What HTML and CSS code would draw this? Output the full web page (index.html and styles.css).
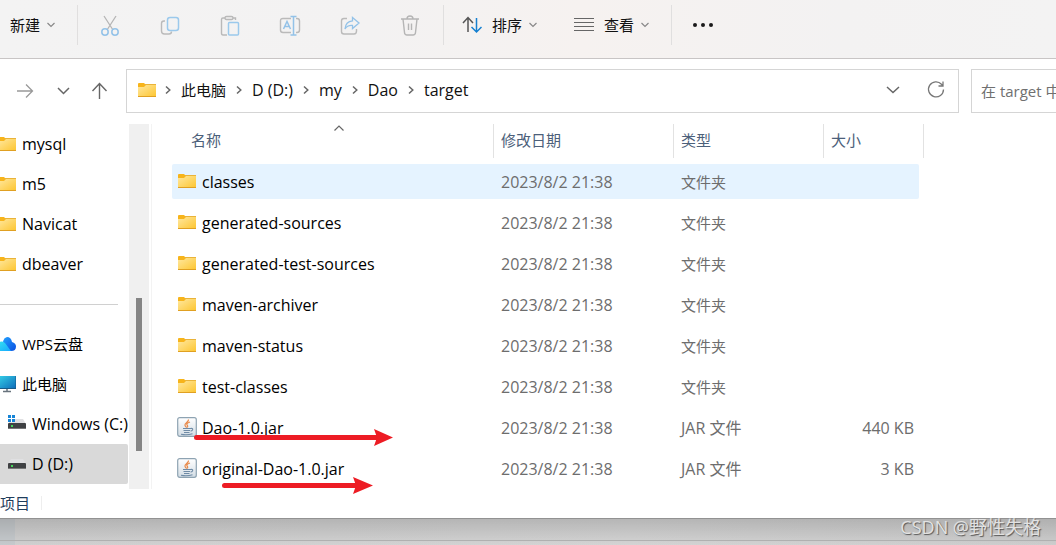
FILE: index.html
```html
<!DOCTYPE html>
<html lang="zh-CN">
<head>
<meta charset="utf-8">
<title>target</title>
<link rel="stylesheet" href="styles.css">
</head>
<body>
<svg class="defs" aria-hidden="true">
  <defs>
    <linearGradient id="gold" x1="0" y1="0" x2="1" y2="1"><stop offset="0" stop-color="#ffe8a0"/><stop offset="1" stop-color="#fdc52f"/></linearGradient>
    <linearGradient id="cloudA" x1="0" y1="0" x2="1" y2="1"><stop offset="0" stop-color="#22a0ff"/><stop offset="1" stop-color="#0a4fe0"/></linearGradient>
    <linearGradient id="cloudB" x1="0" y1="0" x2="1" y2="1"><stop offset="0" stop-color="#35e0f0"/><stop offset="1" stop-color="#16a8ff"/></linearGradient>
    <linearGradient id="screen" x1="0" y1="0" x2="1" y2="1"><stop offset="0" stop-color="#35d0e8"/><stop offset="1" stop-color="#0c69b8"/></linearGradient>
    <linearGradient id="paper" x1="0" y1="0" x2="0" y2="1"><stop offset="0" stop-color="#ffffff"/><stop offset="1" stop-color="#d3dde5"/></linearGradient>
    <symbol id="folder" viewBox="0 0 18 14">
      <path d="M0 1Q0 0 1 0H6L8 2H18V5H0Z" fill="#f7b41b"/>
      <path d="M0 4H6L8 2H18V14H0Z" fill="url(#gold)"/>
      <path d="M7 1.500H18" stroke="#e9b33a"/>
      <path d="M0 13.500H18" stroke="#e0a022"/>
    </symbol>
    <symbol id="down" viewBox="0 0 12 12"><path d="M2.500 4L6 7.500L9.500 4" fill="none" stroke="currentColor" stroke-width="1.200"/></symbol>
    <symbol id="right" viewBox="0 0 12 12"><path d="M4 2.500L7.800 6L4 9.500" fill="none" stroke="#666" stroke-width="1.500"/></symbol>
    <symbol id="drive" viewBox="0 0 18 18">
      <path d="M3 4H15L18 9H0Z" fill="#e0e0e2"/>
      <rect y="8" width="18" height="6" rx="1" fill="#3f4143"/><path d="M0 13.500H18" stroke="#777"/>
      <rect x="3" y="10" width="2" height="2" fill="#45d65a"/>
    </symbol>
    <symbol id="jar" viewBox="0 0 20 20">
      <rect x=".7" y=".7" width="18.600" height="18.600" rx="2" fill="url(#paper)" stroke="#8ea3b2" stroke-width="1.200"/>
      <path d="M11.500 2.500C12 5 7 6 8 8.500Q8.500 9.700 9.800 10.500M13 5C9.500 6 9.200 7.500 10.500 8.500Q11 9.500 10.300 10.500" fill="none" stroke="#e98a4a" stroke-width="1.200"/>
      <path d="M6 11.500H13.500M6.500 13.500H13M7 15.500H12.500M4 17.300Q10 18.500 15.500 16.800M13.500 11.500Q16.500 11 15.500 13Q15 14 13.500 14" fill="none" stroke="#6f8ba6" stroke-width="1.100"/>
    </symbol>
  </defs>
</svg>

<div class="toolbar">
  <button class="tool menu">新建<svg class="i12"><use href="#down"/></svg></button>
  <span class="sep"></span>
  <div class="icons">
    <button class="tool" aria-label="剪切"><svg class="i24" viewBox="0 0 24 24" fill="none"><path d="M6 3L15 17M18 3L9 17" stroke="#b5b5b5" stroke-width="1.300"/><circle cx="7" cy="19" r="3.200" stroke="#93c2e8" stroke-width="1.500"/><circle cx="17" cy="19" r="3.200" stroke="#93c2e8" stroke-width="1.500"/></svg></button>
    <button class="tool" aria-label="复制"><svg class="i24" viewBox="0 0 24 24" fill="none"><path d="M7 8H6Q3.500 8 3.500 10.500V18Q3.500 21 6.500 21H11Q13.500 21 13.500 18.500" stroke="#bababa" stroke-width="1.400"/><rect x="9.500" y="4.500" width="11" height="13" rx="2.500" stroke="#9bc9ec" stroke-width="1.500"/></svg></button>
    <button class="tool" aria-label="粘贴"><svg class="i24" viewBox="0 0 24 24" fill="none"><path d="M7 5H5Q3.500 5 3.500 6.500V20Q3.500 22 5 22H9M15 5H17.500V7" stroke="#b9b9b9" stroke-width="1.400"/><rect x="7" y="3.500" width="8" height="3" rx="1.500" stroke="#b9b9b9" stroke-width="1.400"/><rect x="10.500" y="9.500" width="10" height="12.500" rx="1" stroke="#9bc9ec" stroke-width="1.500"/></svg></button>
    <button class="tool" aria-label="重命名"><svg class="i24" viewBox="0 0 24 24" fill="none"><path d="M13 5.500H5Q2.500 5.500 2.500 8V17Q2.500 19.500 5 19.500H13M18 5.500H19Q21.500 5.500 21.500 8V17Q21.500 19.500 19 19.500H18" stroke="#bababa" stroke-width="1.400"/><path d="M5.500 16L9 8.500L12.500 16M6.500 13.500H11.500M15.500 4V22M12.500 3.500H18.500M12.500 22H18.500" stroke="#93c2e8" stroke-width="1.500"/></svg></button>
    <button class="tool" aria-label="共享"><svg class="i24" viewBox="0 0 24 24" fill="none"><path d="M9 5.500H6Q3.500 5.500 3.500 8V18.500Q3.500 21 6 21H16Q18.500 21 18.500 18V16" stroke="#bababa" stroke-width="1.400"/><path d="M14.500 4.500L21 10L14.500 15.500V12.500Q9.500 12 7 16Q7.500 8.500 14.500 7.800Z" stroke="#93c2e8" stroke-width="1.300"/></svg></button>
    <button class="tool" aria-label="删除"><svg class="i24" viewBox="0 0 24 24" fill="none" stroke="#b5b5b5" stroke-width="1.400"><path d="M3 6H21M5 6L6.500 19.500Q6.700 22 9 22H15Q17.300 22 17.500 19.500L19 6M9 6Q9 3 12 3T15 6M10.500 10.500V17M13.500 10.500V17"/></svg></button>
  </div>
  <span class="sep"></span>
  <button class="tool menu first"><svg class="i20" viewBox="0 0 20 20" fill="none" stroke-width="1.500"><path d="M6 17V3M1 8L6 2.500L11 8" stroke="#555"/><path d="M14.500 3V17M9.500 12L14.500 17L19.500 12" stroke="#1680d0"/></svg>排序<svg class="i12"><use href="#down"/></svg></button>
  <button class="tool menu second"><svg class="i20" viewBox="0 0 20 20"><path d="M0 3.500H20M0 7.500H20M0 11.500H20M0 15.500H20" stroke="#666" stroke-width="1.200"/></svg>查看<svg class="i12"><use href="#down"/></svg></button>
  <span class="sep"></span>
  <button class="tool more" aria-label="更多"><svg class="i24" viewBox="0 0 24 24" fill="#1a1a1a"><circle cx="4" cy="12" r="2"/><circle cx="12" cy="12" r="2"/><circle cx="20" cy="12" r="2"/></svg></button>
</div>

<div class="navbar">
  <div class="arrows">
    <button class="tool" aria-label="前进"><svg class="i20" viewBox="0 0 20 20" fill="none" stroke="#999" stroke-width="1.300"><path d="M2 10H17M11 3.500L17.500 10L11 16.500"/></svg></button>
    <button class="tool" aria-label="最近"><svg class="i20" viewBox="0 0 20 20" fill="none" stroke="#666" stroke-width="1.500"><path d="M6 7L11.500 12.500L17 7"/></svg></button>
    <button class="tool" aria-label="向上"><svg class="i20" viewBox="0 0 20 20" fill="none" stroke="#666" stroke-width="1.400"><path d="M10.500 18V3M3.500 10L10.500 2.500L17.500 10"/></svg></button>
  </div>
  <div class="address">
    <svg class="folder"><use href="#folder"/></svg>
    <nav class="crumbs" aria-label="路径">
      <svg class="i12"><use href="#right"/></svg><button class="tool cjk">此电脑</button>
      <svg class="i12"><use href="#right"/></svg><button class="tool">D (D:)</button>
      <svg class="i12"><use href="#right"/></svg><button class="tool">my</button>
      <svg class="i12"><use href="#right"/></svg><button class="tool">Dao</button>
      <svg class="i12"><use href="#right"/></svg><button class="tool">target</button>
    </nav>
    <button class="tool" aria-label="历史记录"><svg class="i20" viewBox="0 0 20 20" fill="none" stroke="#666" stroke-width="1.500"><path d="M4 7L10 12.500L16 7"/></svg></button>
    <button class="tool" aria-label="刷新"><svg class="i20" viewBox="0 0 20 20" fill="none" stroke="#777" stroke-width="1.300"><path d="M17.500 9.500A7.500 7.500 0 1 1 15.500 4.300L17 5.700M17 1.500V6H12.500"/></svg></button>
  </div>
  <input class="search" type="text" aria-label="搜索" placeholder="在 target 中搜索">
</div>

<div class="body">
  <nav class="side" aria-label="导航窗格">
    <button class="place"><svg class="folder"><use href="#folder"/></svg>mysql</button>
    <button class="place"><svg class="folder"><use href="#folder"/></svg>m5</button>
    <button class="place"><svg class="folder"><use href="#folder"/></svg>Navicat</button>
    <button class="place"><svg class="folder"><use href="#folder"/></svg>dbeaver</button>
    <hr>
    <button class="place cjk"><svg class="i18" viewBox="0 0 18 18"><path d="M6 15Q3 3 9 2Q13 2 14 7Q18 8 18 11.500Q18 16 13 16H6Z" fill="url(#cloudA)"/><path d="M0 15V8Q5 4 8.500 10L13 16H3Q1 16 0 15Z" fill="url(#cloudB)"/></svg>WPS云盘</button>
    <button class="place cjk"><svg class="i18" viewBox="0 0 18 18"><rect y="1" width="18" height="13" fill="url(#screen)"/><path d="M0 13.500H18M18 1V14" stroke="#175b88"/><path d="M9 14V16M5 16.500H13" stroke="#68737d" stroke-width="1.500"/></svg>此电脑</button>
    <button class="place sub"><svg class="i18" viewBox="0 0 18 18"><use href="#drive"/><path d="M0 0H7V7H0Z" fill="#fff"/><path d="M0 0H3V3H0ZM4 0H7V3H4ZM0 4H3V7H0ZM4 4H7V7H4Z" fill="#1684d6"/></svg>Windows (C:)</button>
    <button class="place sub on"><svg class="i18"><use href="#drive"/></svg>D (D:)</button>
  </nav>
  <div class="scroll"><span class="thumb"></span></div>
  <main class="files">
    <table>
      <colgroup><col class="c1"><col class="c2"><col class="c3"><col class="c4"><col class="c5"></colgroup>
      <thead><tr>
        <th class="name">名称<svg class="caret" viewBox="0 0 12 8"><path d="M1.500 6.500L6 2L10.500 6.500" fill="none" stroke="#666" stroke-width="1.200"/></svg></th>
        <th>修改日期</th><th>类型</th><th class="open">大小</th><th></th>
      </tr></thead>
      <tbody>
        <tr class="on"><td><span class="file"><svg class="folder"><use href="#folder"/></svg>classes</span></td><td>2023/8/2 21:38</td><td class="cjk">文件夹</td><td></td></tr>
        <tr><td><span class="file"><svg class="folder"><use href="#folder"/></svg>generated-sources</span></td><td>2023/8/2 21:38</td><td class="cjk">文件夹</td><td></td></tr>
        <tr><td><span class="file"><svg class="folder"><use href="#folder"/></svg>generated-test-sources</span></td><td>2023/8/2 21:38</td><td class="cjk">文件夹</td><td></td></tr>
        <tr><td><span class="file"><svg class="folder"><use href="#folder"/></svg>maven-archiver</span></td><td>2023/8/2 21:38</td><td class="cjk">文件夹</td><td></td></tr>
        <tr><td><span class="file"><svg class="folder"><use href="#folder"/></svg>maven-status</span></td><td>2023/8/2 21:38</td><td class="cjk">文件夹</td><td></td></tr>
        <tr><td><span class="file"><svg class="folder"><use href="#folder"/></svg>test-classes</span></td><td>2023/8/2 21:38</td><td class="cjk">文件夹</td><td></td></tr>
        <tr><td><span class="file"><svg class="i20"><use href="#jar"/></svg>Dao-1.0.jar</span><svg class="mark long" viewBox="0 0 200 18" fill="#ed1c24"><rect y="6" width="190" height="5" rx="2.500"/><path d="M180 0L199 8.500L180 17L183 8.500Z"/></svg></td><td>2023/8/2 21:38</td><td>JAR 文件</td><td>440 KB</td></tr>
        <tr><td><span class="file"><svg class="i20"><use href="#jar"/></svg>original-Dao-1.0.jar</span><svg class="mark short" viewBox="0 0 152 18" fill="#ed1c24"><rect y="6" width="142" height="5" rx="2.500"/><path d="M131 0L151 8.500L131 17L134 8.500Z"/></svg></td><td>2023/8/2 21:38</td><td>JAR 文件</td><td>3 KB</td></tr>
      </tbody>
    </table>
  </main>
</div>

<footer class="status"><span>项目</span></footer>
<div class="desk"><span class="credit">CSDN @野性失格</span></div>
</body>
</html>
```

FILE: styles.css
```css
* { box-sizing: border-box; }
body {
  margin: 0;
  min-height: 100vh;
  display: flex;
  flex-direction: column;
  overflow: hidden;
  background: #fff;
  color: #111;
  font: 16px/20px "Open Sans", "Noto Sans CJK SC", sans-serif;
}
button, input { font: inherit; color: inherit; }
svg { flex: none; display: block; }
.defs { position: absolute; width: 0; height: 0; }
.i12 { width: 12px; height: 12px; }
.i18 { width: 18px; height: 18px; }
.i20 { width: 20px; height: 20px; }
.i24 { width: 24px; height: 24px; }
.folder { width: 18px; height: 14px; }

.tool {
  display: flex;
  align-items: center;
  justify-content: center;
  padding: 0;
  border: 0;
  background: none;
  white-space: nowrap;
}

.toolbar {
  display: flex;
  align-items: center;
  height: 59px;
  padding: 0 0 8px 10px;
  background: linear-gradient(90deg, #f3f3f3, #f3f2f2 35%, #f6f2f0 55%, #f3f2f2 80%, #f3f3f3);
  border-bottom: 1px solid #c8c5c5;
}
.menu, .cjk, th, .status, .search { font-size: 15px; }
.menu { gap: 5px; }
.menu .i12 { color: #888; }
.menu .i20 { margin-right: 5px; }
.sep { width: 1px; height: 40px; background: #e0dfdf; }
.menu + .sep { margin-left: 20px; }
.icons { display: flex; gap: 20px; padding: 0 13px 0 12px; }
.icons .tool { width: 40px; height: 40px; }
.first { margin-left: 18px; }
.second { margin-left: 35px; }
.more { margin-left: 19px; }

.navbar {
  display: flex;
  align-items: center;
  padding: 10px 0 5px;
}
.arrows { display: flex; gap: 17px; padding: 0 17px 0 15px; }
.address {
  flex: 1;
  display: flex;
  align-items: center;
  gap: 23px;
  height: 44px;
  padding: 0 12px 2px 11px;
  border: 1px solid #d5d5d5;
}
.crumbs { flex: 1; display: flex; align-items: center; gap: 7px; margin-left: -17px; }
.search {
  width: 85px;
  height: 44px;
  margin-left: 12px;
  padding: 0 0 0 9px;
  border: 1px solid #d5d5d5;
  border-right: 0;
  border-radius: 0;
  background: #fff;
}
.search::placeholder { color: #707070; }

.body { display: flex; }
.side { width: 130px; margin-left: -2px; padding-top: 6px; flex: none; }
.place {
  display: flex;
  align-items: center;
  gap: 6px;
  width: 100%;
  height: 40px;
  padding: 0;
  border: 0;
  border-radius: 2px;
  background: none;
  color: #000;
  white-space: nowrap;
}
.sub { padding-left: 10px; }
.place.on { background: #d9d9d9; }
.side hr { margin: 20px 10px 19px 0; border: 0; border-top: 1px solid #d0d0d0; }
.scroll {
  display: flex;
  align-items: flex-end;
  width: 20px;
  margin: 6px 0 3px 1px;
  padding: 0 7px 38px;
  background: #f0f0f0;
  box-shadow: 2px 0 #fff, 3px 0 #f3f3f3;
}
.thumb { width: 6px; height: 153px; background: #858585; }

.files { flex: 1; padding-left: 23px; }
table { width: 752px; table-layout: fixed; border-collapse: separate; border-spacing: 0 6px; }
.c1 { width: 322px; }
.c2 { width: 180px; }
.c3 { width: 150px; }
.c4 { width: 95px; }
.c5 { width: 5px; }
th {
  height: 34px;
  padding: 0 7px 2px;
  border-right: 1px solid #e2e2e2;
  color: #4c607a;
  font-weight: 400;
  text-align: left;
}
th.name { position: relative; padding-left: 19px; }
th.open { border-right: 0; }
th:last-child { padding: 0; }
.caret { position: absolute; left: 50%; top: 0; width: 12px; height: 8px; }
td { height: 35px; padding: 0 7px; color: #6d6d6d; white-space: nowrap; }
td:first-child { position: relative; padding-left: 6px; color: #000; border-radius: 2px 0 0 2px; }
td:nth-child(4) { padding-right: 5px; text-align: right; border-radius: 0 2px 2px 0; }
tr.on td { background: #e5f3ff; }
.file { display: flex; align-items: center; gap: 6px; }
.file svg { margin-bottom: 2px; }
.file .i20 { margin: 0 -1px 2px; }
.mark { position: absolute; height: 18px; }
.long { left: 22px; top: 19px; width: 200px; }
.short { left: 50px; top: 26px; width: 152px; }

.status { height: 26px; padding-bottom: 4px; display: flex; align-items: center; color: #1f3d5c; }
.status span { padding-right: 11px; line-height: 14px; border-right: 1px solid #eee; }
.desk {
  position: relative;
  flex: 1;
  border-top: 1px solid #929292;
  background:
    linear-gradient(#b0b0b0, #b0b0b0) 0 21px / 100% 1px no-repeat,
    linear-gradient(rgba(0, 0, 0, .14), rgba(0, 0, 0, 0)),
    linear-gradient(90deg, #c6cacd 15px, #d0d0d0 15px, #d4d4d4 60%, #cdcdcd);
}
.credit {
  position: absolute;
  right: 15px;
  top: -4px;
  color: #e2e2e2;
  font-size: 18px;
  line-height: 24px;
  text-shadow: 1px 1px 1px #555;
  white-space: nowrap;
}
```
